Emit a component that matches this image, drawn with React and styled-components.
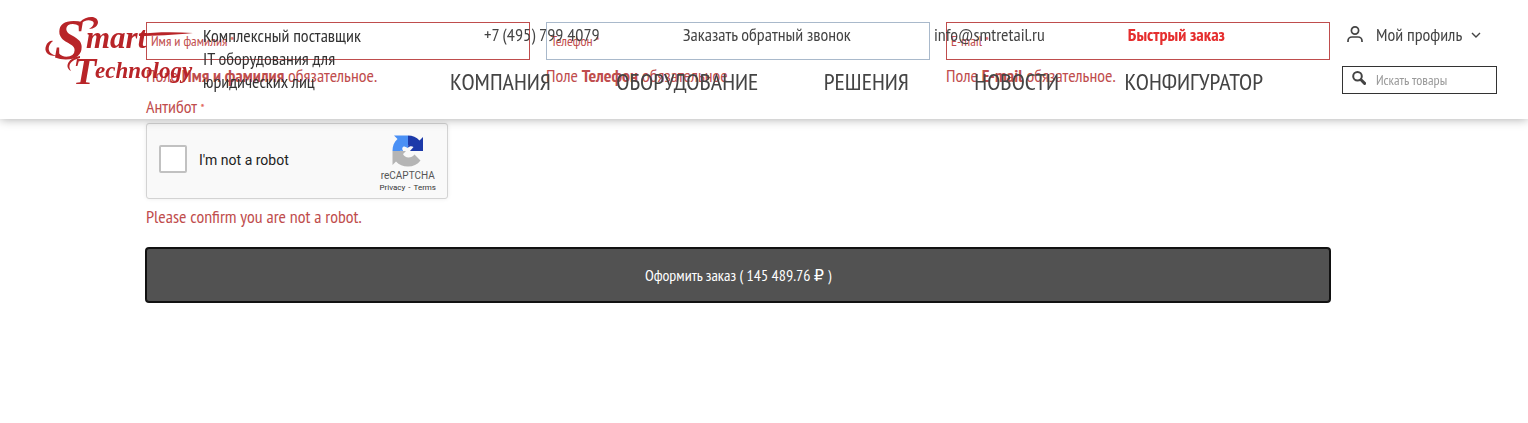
import React, { useState } from 'react';
import styled, { createGlobalStyle } from 'styled-components';

const NAV = ['КОМПАНИЯ', 'ОБОРУДОВАНИЕ', 'РЕШЕНИЯ', 'НОВОСТИ', 'КОНФИГУРАТОР'];

const FIELDS = [
  { id: 'name', label: 'Имя и фамилия', type: 'text', end: '.' },
  { id: 'phone', label: 'Телефон', type: 'tel', end: '', valid: true },
  { id: 'email', label: 'E-mail', type: 'email', end: '.' },
];

const Logo = () => (
  <svg width='150' height='80' viewBox='0 0 150 80' overflow='visible' role='img' aria-label='Smart Technology'>
    <g fill='#b82428' fontFamily='"Liberation Serif", serif' fontStyle='italic' fontWeight='bold'>
      <text x='10' y='44' fontSize='56'>S</text>
      <text x='42' y='33' fontSize='31'>mart</text>
      <text x='29' y='69' fontSize='38'>T</text>
      <text x='51' y='63' fontSize='23'>echnology</text>
    </g>
    <g fill='#b82428'>
      <path d='M36 7C42 1 53 0 54 7C54 11 50 14 45 14C50 11 51 7 48 6C44 4 40 6 36 9Z' />
      <path d='M12 41C3 41 0 36 2 31C3 27 7 25 9 26C4 30 3 36 8 39C11 41 14 41 17 40Z' />
      <path d='M95 19C111 17 130 17 149 18C130 20 110 21 95 21Z' />
      <path d='M36 43C27 45 23 50 27 56C20 52 24 43 36 41Z' />
    </g>
  </svg>
);

const UserIcon = () => (
  <svg width='16' height='18' viewBox='0 0 16 18' fill='none' stroke='#444' strokeWidth='1.7' aria-hidden='true'>
    <circle cx='8' cy='4.5' r='3.6' />
    <path d='M1 16v-1a4 4 0 0 1 4-4h6a4 4 0 0 1 4 4v1' />
  </svg>
);

const ChevronIcon = () => (
  <svg width='10' height='6' viewBox='0 0 10 6' fill='none' stroke='#444' strokeWidth='1.4' aria-hidden='true'>
    <path d='M1 1l4 4 4-4' />
  </svg>
);

const SearchIcon = () => (
  <svg width='14' height='14' viewBox='0 0 14 14' fill='none' stroke='#444' aria-hidden='true'>
    <circle cx='5.5' cy='5.3' r='4.3' strokeWidth='2' />
    <path d='M9 8.8l3.6 3.6' strokeWidth='3' strokeLinecap='round' />
  </svg>
);

const CaptchaIcon = () => (
  <svg width='32' height='32' viewBox='0 0 64 64' aria-hidden='true'>
    <path fill='#1c3aa9' d='M62 32V4l-7 7C49 4 41 1 32 1v18c1 3 0 5-1 7c5-5 9-4 12-2l-7 8z' />
    <path fill='#4a90f5' d='M32 1H4l7 7C4 14 1 22 1 32h15c3-1 5 0 7 1c-4-5-3-10 2-10l7 3z' />
    <path fill='#b5b5b5' d='M1 32v28l7-7c6 7 14 10 24 10c10 0 19-4 25-12L45 39c-3 4-7 6-12 6c-5 0-9-3-11-7l6-6z' />
  </svg>
);

const App = () => {
  const [robot, setRobot] = useState(false);
  return (
    <>
      <GlobalStyle />
      <Header>
        <LogoLink href='#'>
          <Logo />
        </LogoLink>
        <Tagline>Комплексный поставщик IT оборудования для юридических лиц</Tagline>
        <Middle>
          <Contacts>
            <ContactLink href='tel:+74957994079'>+7 (495) 799 4079</ContactLink>
            <ContactLink href='#'>Заказать обратный звонок</ContactLink>
            <ContactLink href='mailto:info@smtretail.ru'>info@smtretail.ru</ContactLink>
            <ContactLink href='#' $accent>Быстрый заказ</ContactLink>
          </Contacts>
          <Nav>
            {NAV.map((item) => (
              <NavLink href='#' key={item}>{item}</NavLink>
            ))}
          </Nav>
        </Middle>
        <Side>
          <ProfileButton type='button'>
            <UserIcon />
            <span>Мой профиль</span>
            <ChevronIcon />
          </ProfileButton>
          <Search>
            <SearchIcon />
            <SearchInput type='search' placeholder='Искать товары' aria-label='Искать товары' />
          </Search>
        </Side>
      </Header>
      <Form onSubmit={(e) => e.preventDefault()}>
        <Fields>
          {FIELDS.map((field) => (
            <div key={field.id}>
              <Field>
                <FieldInput id={field.id} type={field.type} $valid={field.valid} />
                <FieldLabel htmlFor={field.id}>{field.label} <Star>*</Star></FieldLabel>
              </Field>
              <Message>Поле <b>{field.label}</b> обязательное{field.end}</Message>
            </div>
          ))}
        </Fields>
        <CaptchaTitle>Антибот <Star>*</Star></CaptchaTitle>
        <Captcha>
          <CaptchaCheck
            id='robot'
            type='checkbox'
            checked={robot}
            onChange={() => setRobot((robot) => !robot)}
          />
          <CaptchaLabel htmlFor='robot'>I'm not a robot</CaptchaLabel>
          <CaptchaBrand>
            <CaptchaIcon />
            <CaptchaName>reCAPTCHA</CaptchaName>
            <CaptchaLinks>
              <a href='#'>Privacy</a>
              <span>-</span>
              <a href='#'>Terms</a>
            </CaptchaLinks>
          </CaptchaBrand>
        </Captcha>
        <Message $spaced>Please confirm you are not a robot.</Message>
        <Submit type='submit'>
          Оформить заказ ( 145 489.76 <Ruble>₽</Ruble> )
        </Submit>
      </Form>
    </>
  );
};

export default App;

const GlobalStyle = createGlobalStyle`
  * {
    box-sizing: border-box;
  }

  body {
    margin: 0;
    background: #fff;
    color: #444;
    font-family: 'PT Sans Narrow', 'Liberation Sans Narrow', 'Noto Sans', sans-serif;
    font-size: 18px;
  }

  a {
    color: inherit;
    text-decoration: none;
  }

  input,
  button {
    font-family: inherit;
  }
`;

const Header = styled.header`
  position: fixed;
  top: 0;
  left: 0;
  right: 0;
  z-index: 10;
  display: flex;
  align-items: flex-start;
  padding: 15px 31px 0 44px;
  height: 119px;
  box-shadow: 0 0 10px rgba(0, 0, 0, 0.35);
`;

const LogoLink = styled.a`
  flex: none;
  width: 150px;
`;

const Tagline = styled.p`
  flex: none;
  width: 166px;
  margin: 9px 0 0 9px;
  color: #333;
  line-height: 23px;
`;

const Middle = styled.div`
  flex: 1;
  margin: 9px 79px 0 81px;
`;

const Contacts = styled.div`
  display: flex;
  justify-content: space-between;
  padding: 0 38px 0 34px;
  line-height: 22px;
`;

const ContactLink = styled.a`
  color: ${(props) => (props.$accent ? '#e52d2d' : '#444')};
  font-weight: ${(props) => (props.$accent ? 'bold' : 'normal')};
  white-space: nowrap;
`;

const Nav = styled.nav`
  display: flex;
  justify-content: space-between;
  margin-top: 20px;
  font-size: 24px;
  line-height: 32px;
`;

const NavLink = styled.a`
  white-space: nowrap;
`;

const Side = styled.div`
  flex: none;
  width: 155px;
  margin-top: 9px;
`;

const ProfileButton = styled.button`
  display: flex;
  align-items: center;
  gap: 9px;
  padding: 0 0 0 5px;
  border: none;
  background: none;
  color: #444;
  font-size: 18px;
  line-height: 22px;
  white-space: nowrap;
  cursor: pointer;

  span {
    margin-left: 4px;
  }
`;

const Search = styled.div`
  display: flex;
  align-items: center;
  gap: 10px;
  height: 28px;
  margin-top: 20px;
  padding: 0 9px;
  border: 1px solid #333;

  svg {
    flex: none;
    margin-bottom: 4px;
  }
`;

const SearchInput = styled.input`
  width: 100%;
  min-width: 0;
  padding: 0;
  border: none;
  outline: none;
  background: none;
  font-size: 14px;

  &::placeholder {
    color: #999;
  }
`;

const Form = styled.form`
  padding: 22px 198px 24px 146px;
  color: #bf4d4d;
`;

const Fields = styled.div`
  display: grid;
  grid-template-columns: repeat(3, 1fr);
  gap: 16px;
`;

const Field = styled.div`
  position: relative;
`;

const FieldInput = styled.input`
  display: block;
  width: 100%;
  height: 38px;
  padding: 0 5px;
  border: 1px solid ${(props) => (props.$valid ? '#a9b9cb' : '#bf4d4d')};
  outline: none;
  font-size: 14px;
`;

const FieldLabel = styled.label`
  position: absolute;
  top: 9px;
  left: 5px;
  font-size: 14px;
  line-height: 20px;
`;

const Star = styled.span`
  color: #e0524a;
  font-size: 14px;
`;

const Message = styled.p`
  margin: ${(props) => (props.$spaced ? '6px 0 0' : '4px 0 0')};
  line-height: 24px;
`;

const CaptchaTitle = styled.div`
  margin: 7px 0 4px;
  height: 24px;
  line-height: 24px;
`;

const Captcha = styled.div`
  display: flex;
  align-items: center;
  width: 302px;
  height: 76px;
  padding: 0 11px 0 12px;
  border: 1px solid #d3d3d3;
  border-radius: 3px;
  background: #f9f9f9;
  box-shadow: 0 0 4px rgba(0, 0, 0, 0.08);
  color: #555;
  font-family: Roboto, sans-serif;
`;

const CaptchaCheck = styled.input`
  appearance: none;
  width: 28px;
  height: 28px;
  margin: 0 12px 4px 0;
  border: 2px solid #c1c1c1;
  border-radius: 2px;
  background: ${(props) => (props.checked ? '#4285f4' : '#fff')};
`;

const CaptchaLabel = styled.label`
  flex: 1;
  margin-bottom: 2px;
  color: #222;
  font-size: 14px;
`;

const CaptchaBrand = styled.div`
  display: flex;
  flex-direction: column;
  align-items: center;
  padding-top: 6px;
`;

const CaptchaName = styled.span`
  margin-top: 2px;
  font-size: 10px;
  line-height: 13px;
`;

const CaptchaLinks = styled.span`
  display: flex;
  gap: 3px;
  color: #333;
  font-size: 8px;
  line-height: 12px;
`;

const Submit = styled.button`
  display: block;
  width: 100%;
  height: 54px;
  margin-top: 19px;
  border: 1px solid #111;
  border-radius: 3px;
  background: #525252;
  box-shadow: 0 0 0 1px #111;
  color: #fff;
  font-size: 16px;
  line-height: 20px;
  cursor: pointer;
`;

const Ruble = styled.span`
  font-family: 'DejaVu Sans', sans-serif;
  font-size: 16px;
`;
